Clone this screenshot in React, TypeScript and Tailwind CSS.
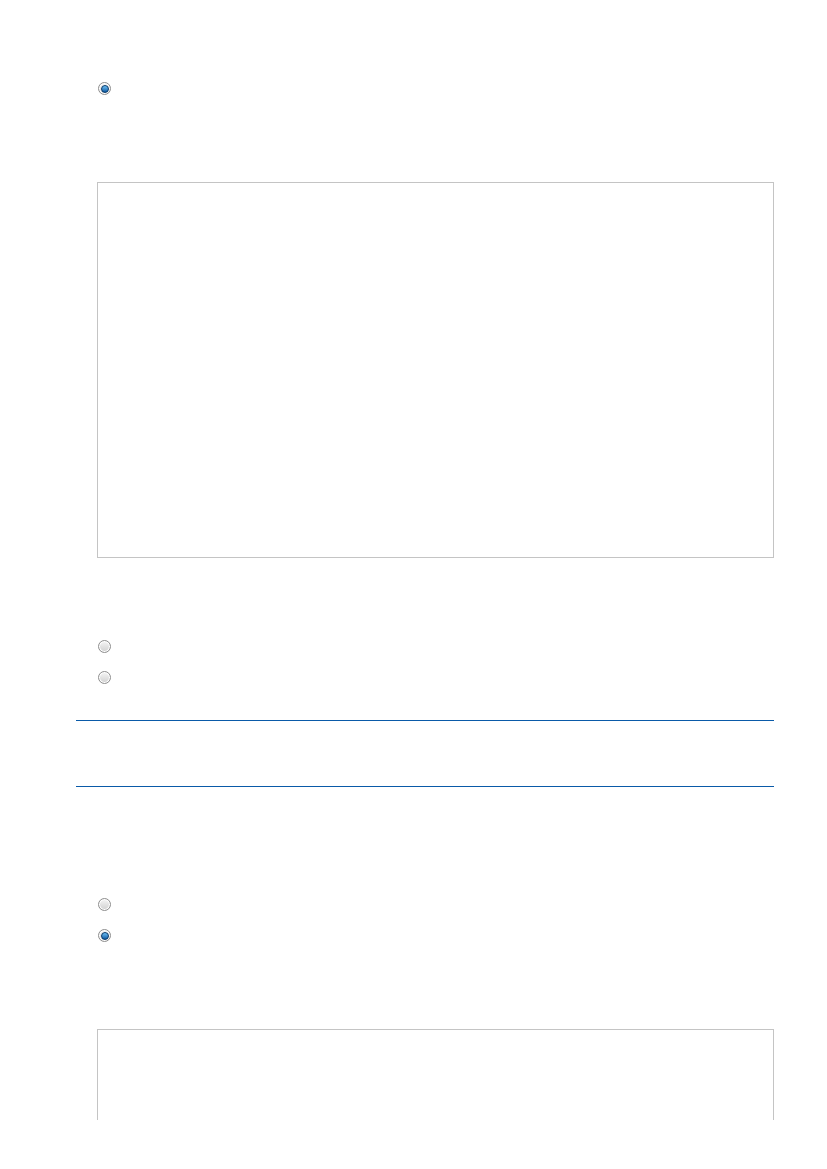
type RadioProps = { checked?: boolean };

// Small bevelled radio button, old-browser style
function Radio({ checked = false }: RadioProps) {
  return (
    <span className="flex h-[13px] w-[13px] items-center justify-center rounded-full border border-[#8e8e8e] bg-gradient-to-b from-[#f6f6f6] to-[#d0d0d0] shadow-[inset_0_0_0_1px_#ffffff]">
      {checked && (
        <span className="h-[8px] w-[8px] rounded-full border border-[#08396a] bg-gradient-to-b from-[#6cc0f5] to-[#0a5aa2]" />
      )}
    </span>
  );
}

function RadioRow({ checked }: RadioProps) {
  return (
    <div className="flex h-[31px] items-center pl-[22px]">
      <Radio checked={checked} />
    </div>
  );
}

function TextBox({ height }: { height: string }) {
  return <div className={`ml-[21px] border border-[#c4c4c4] bg-white ${height}`} />;
}

export default function App() {
  return (
    <div className="h-[1120px] overflow-hidden bg-white pl-[76px] pr-[53px] font-['Liberation_Sans',sans-serif]">
      <div className="pt-[73px]">
        <RadioRow checked />
      </div>

      <div className="mt-[78px]">
        <TextBox height="h-[376px]" />
      </div>

      <div className="mt-[73px]">
        <RadioRow />
        <RadioRow />
      </div>

      <div className="mt-[27px] h-[67px] border-y border-[#0a5aa8]" />

      <div className="mt-[102px]">
        <RadioRow />
        <RadioRow checked />
      </div>

      <div className="mt-[78px]">
        <TextBox height="h-[200px]" />
      </div>
    </div>
  );
}
